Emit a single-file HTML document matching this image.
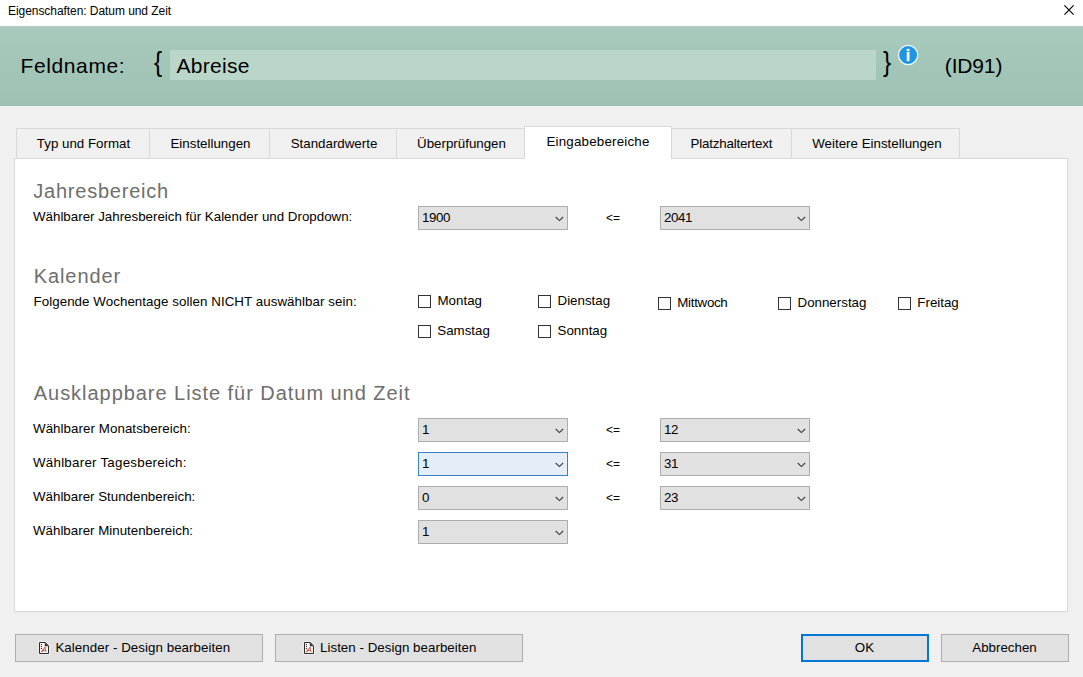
<!DOCTYPE html>
<html lang="de"><head><meta charset="utf-8"><title>Eigenschaften: Datum und Zeit</title>
<style>
*{box-sizing:border-box;margin:0;padding:0}
html,body{width:1083px;height:677px;overflow:hidden;background:#f0f0f0;font-family:"Liberation Sans",sans-serif;color:#000}
.abs{position:absolute;white-space:nowrap}
#titlebar{left:0;top:0;width:1083px;height:26px;background:#fff}
#title{left:8px;top:3px;font-size:12px;line-height:16px}
#header{left:0;top:26px;width:1083px;height:80px;background:linear-gradient(#b3cec4,#b3cec4 1.25%,#a9cabd 1.3%,#9cc1b2)}
#fname{left:170px;top:50px;width:706px;height:30px;background:#b9d6c9}
.h1{font-size:21px;line-height:30px}
.tab{top:128px;height:31px;background:#f0f0f0;border:1px solid #d9d9d9;font-size:13.33px;line-height:30px;text-align:center}
.tab.sel{top:126px;height:33px;background:#fff;border-bottom:none}
#panel{left:14px;top:158px;width:1054px;height:454px;background:#fff;border:1px solid #d8d8d8}
.sec{font-size:20px;color:#6e6e6e;line-height:28px}
.lbl{font-size:13.33px;line-height:16px}
.dd{width:150px;height:24px;background:#e1e1e1;border:1px solid #adadad;font-size:13.33px;line-height:22px;padding:0 0 0 3px;letter-spacing:-0.41px}
.dd.focus{background:#e3eef8;border-color:#3a80c4}
.dd svg{position:absolute;left:135.5px;top:9px}
.le{font-size:12px;line-height:14px}
.cb{width:13px;height:13px;border:1px solid #333;background:#fff}
.btn{height:28px;background:#e1e1e1;border:1px solid #adadad;font-size:13.33px;line-height:26px;text-align:center}
.btn .ic{position:absolute;top:7px;overflow:visible}
.btn.def{border:2px solid #0078d7;line-height:24px}
</style></head><body>
<div class="abs" id="titlebar"></div>
<div class="abs" id="title" style="letter-spacing:-0.06px">Eigenschaften: Datum und Zeit</div>
<svg class="abs" style="left:1064px;top:5px" width="10" height="10" viewBox="0 0 10 10"><path d="M0.4 0.4 L9.6 9.6 M9.6 0.4 L0.4 9.6" stroke="#000" stroke-width="1.15" fill="none"/></svg>
<div class="abs" id="header"></div>
<div class="abs" id="fname"></div>
<div class="abs h1" id="t_feld" style="left:20.6px;top:51px;letter-spacing:0.6px">Feldname:</div>
<div class="abs h1" id="t_lb" style="left:154.2px;top:46px;font-size:28.4px;transform:scaleX(.86);transform-origin:0 0">{</div>
<div class="abs h1" id="t_abr" style="left:176.5px;top:51px;letter-spacing:0.3px">Abreise</div>
<div class="abs h1" id="t_rb" style="left:883.2px;top:46px;font-size:28.4px;transform:scaleX(.86);transform-origin:0 0">}</div>
<div class="abs h1" id="t_id" style="left:944.8px;top:51px;letter-spacing:-0.15px">(ID91)</div>
<svg class="abs" id="info" style="left:897px;top:44px" width="22" height="22" viewBox="0 0 22 22"><circle cx="11.1" cy="11" r="9.6" fill="#2195e2" stroke="#e6f9fd" stroke-width="1.3"/><rect x="9.75" y="4.8" width="2.7" height="2.4" fill="#fff"/><rect x="9.75" y="8" width="2.7" height="9.1" fill="#fff"/></svg>

<div class="abs" id="panel"></div>
<div class="abs tab" id="tab1" style="left:16px;width:134px;padding-left:1px">Typ und Format</div>
<div class="abs tab" id="tab2" style="left:149px;width:121px;padding-left:2px">Einstellungen</div>
<div class="abs tab" id="tab3" style="left:269px;width:128px;padding-left:2px">Standardwerte</div>
<div class="abs tab" id="tab4" style="left:396px;width:130px;padding-left:1px">Überprüfungen</div>
<div class="abs tab sel" id="tab5" style="left:524px;width:148px;letter-spacing:0.2px">Eingabebereiche</div>
<div class="abs tab" id="tab6" style="left:671px;width:121px;letter-spacing:-0.18px">Platzhaltertext</div>
<div class="abs tab" id="tab7" style="left:791px;width:169px;padding-left:3px">Weitere Einstellungen</div>

<div class="abs sec" id="s1" style="left:33.3px;top:177px;letter-spacing:0.77px">Jahresbereich</div>
<div class="abs lbl" id="l1" style="left:33px;top:209px">Wählbarer Jahresbereich für Kalender und Dropdown:</div>
<div class="abs dd" id="d1" style="left:418px;top:206px">1900<svg width="10" height="6" viewBox="0 0 10 6"><path d="M0.7 1 L4.4 4.6 L8.1 1" stroke="#3a3a3a" stroke-width="1.1" fill="none"/></svg></div>
<div class="abs le" id="le1" style="left:606px;top:211px">&lt;=</div>
<div class="abs dd" id="d2" style="left:660px;top:206px">2041<svg width="10" height="6" viewBox="0 0 10 6"><path d="M0.7 1 L4.4 4.6 L8.1 1" stroke="#3a3a3a" stroke-width="1.1" fill="none"/></svg></div>

<div class="abs sec" id="s2" style="left:33.7px;top:262px;letter-spacing:0.92px">Kalender</div>
<div class="abs lbl" id="l2" style="left:33.5px;top:294px;letter-spacing:0.06px">Folgende Wochentage sollen NICHT auswählbar sein:</div>
<div class="abs cb" style="left:418px;top:295px"></div><div class="abs lbl" id="c1" style="left:437.5px;top:293px">Montag</div>
<div class="abs cb" style="left:538px;top:295px"></div><div class="abs lbl" id="c2" style="left:557.5px;top:293px">Dienstag</div>
<div class="abs cb" style="left:658px;top:297px"></div><div class="abs lbl" id="c3" style="left:677.3px;top:295px;letter-spacing:-0.3px">Mittwoch</div>
<div class="abs cb" style="left:778px;top:297px"></div><div class="abs lbl" id="c4" style="left:797.5px;top:295px">Donnerstag</div>
<div class="abs cb" style="left:898px;top:297px"></div><div class="abs lbl" id="c5" style="left:917.3px;top:295px">Freitag</div>
<div class="abs cb" style="left:418px;top:325px"></div><div class="abs lbl" id="c6" style="left:437.3px;top:323px">Samstag</div>
<div class="abs cb" style="left:538px;top:325px"></div><div class="abs lbl" id="c7" style="left:557.5px;top:323px">Sonntag</div>

<div class="abs sec" id="s3" style="left:33.8px;top:379px;letter-spacing:0.955px">Ausklappbare Liste für Datum und Zeit</div>
<div class="abs lbl" id="l3" style="left:33px;top:421px;letter-spacing:0.06px">Wählbarer Monatsbereich:</div>
<div class="abs lbl" id="l4" style="left:33px;top:455px;letter-spacing:0.25px">Wählbarer Tagesbereich:</div>
<div class="abs lbl" id="l5" style="left:33px;top:489px">Wählbarer Stundenbereich:</div>
<div class="abs lbl" id="l6" style="left:33px;top:523px">Wählbarer Minutenbereich:</div>
<div class="abs dd" id="d3" style="left:418px;top:418px">1<svg width="10" height="6" viewBox="0 0 10 6"><path d="M0.7 1 L4.4 4.6 L8.1 1" stroke="#3a3a3a" stroke-width="1.1" fill="none"/></svg></div>
<div class="abs dd focus" id="d4" style="left:418px;top:452px">1<svg width="10" height="6" viewBox="0 0 10 6"><path d="M0.7 1 L4.4 4.6 L8.1 1" stroke="#3a3a3a" stroke-width="1.1" fill="none"/></svg></div>
<div class="abs dd" id="d5" style="left:418px;top:486px">0<svg width="10" height="6" viewBox="0 0 10 6"><path d="M0.7 1 L4.4 4.6 L8.1 1" stroke="#3a3a3a" stroke-width="1.1" fill="none"/></svg></div>
<div class="abs dd" id="d6" style="left:418px;top:520px">1<svg width="10" height="6" viewBox="0 0 10 6"><path d="M0.7 1 L4.4 4.6 L8.1 1" stroke="#3a3a3a" stroke-width="1.1" fill="none"/></svg></div>
<div class="abs le" id="le2" style="left:606px;top:423px">&lt;=</div>
<div class="abs le" id="le3" style="left:606px;top:457px">&lt;=</div>
<div class="abs le" id="le4" style="left:606px;top:491px">&lt;=</div>
<div class="abs dd" id="d7" style="left:660px;top:418px">12<svg width="10" height="6" viewBox="0 0 10 6"><path d="M0.7 1 L4.4 4.6 L8.1 1" stroke="#3a3a3a" stroke-width="1.1" fill="none"/></svg></div>
<div class="abs dd" id="d8" style="left:660px;top:452px">31<svg width="10" height="6" viewBox="0 0 10 6"><path d="M0.7 1 L4.4 4.6 L8.1 1" stroke="#3a3a3a" stroke-width="1.1" fill="none"/></svg></div>
<div class="abs dd" id="d9" style="left:660px;top:486px">23<svg width="10" height="6" viewBox="0 0 10 6"><path d="M0.7 1 L4.4 4.6 L8.1 1" stroke="#3a3a3a" stroke-width="1.1" fill="none"/></svg></div>

<div class="abs btn" id="b1" style="left:15px;top:634px;width:248px;text-align:left;padding-left:39.4px;letter-spacing:0.05px"><svg class="ic" style="left:23px" width="11" height="13" viewBox="0 0 11 13"><path d="M0.5 0.5 H6.3 L9.5 3.7 V11.5 H0.5 Z" fill="none" stroke="#fff" stroke-opacity="0.55" stroke-width="2.6"/><path d="M0.5 0.5 H6.3 L9.5 3.7 V11.5 H0.5 Z" fill="#fdf6f4" stroke="#2b2b2b" stroke-width="1"/><path d="M5.8 0.5 V4.2 H9.5 Z" fill="#2b2b2b"/><rect x="1.9" y="2" width="1.1" height="1.1" fill="#2b2b2b"/><rect x="1.9" y="4" width="1.1" height="1.1" fill="#2b2b2b"/><rect x="1.9" y="6" width="1.1" height="1.1" fill="#2b2b2b"/><path d="M1.9 10.2 L4.6 7" stroke="#b5301e" stroke-width="0.7" fill="none"/><text x="3.1" y="10.3" font-family="Liberation Sans, sans-serif" font-size="7.2" font-style="italic" fill="#b5301e">A</text></svg>Kalender - Design bearbeiten</div>
<div class="abs btn" id="b2" style="left:275px;top:634px;width:248px;text-align:left;padding-left:44px;letter-spacing:0.03px"><svg class="ic" style="left:28px" width="11" height="13" viewBox="0 0 11 13"><path d="M0.5 0.5 H6.3 L9.5 3.7 V11.5 H0.5 Z" fill="none" stroke="#fff" stroke-opacity="0.55" stroke-width="2.6"/><path d="M0.5 0.5 H6.3 L9.5 3.7 V11.5 H0.5 Z" fill="#fdf6f4" stroke="#2b2b2b" stroke-width="1"/><path d="M5.8 0.5 V4.2 H9.5 Z" fill="#2b2b2b"/><rect x="1.9" y="2" width="1.1" height="1.1" fill="#2b2b2b"/><rect x="1.9" y="4" width="1.1" height="1.1" fill="#2b2b2b"/><rect x="1.9" y="6" width="1.1" height="1.1" fill="#2b2b2b"/><path d="M1.9 10.2 L4.6 7" stroke="#b5301e" stroke-width="0.7" fill="none"/><text x="3.1" y="10.3" font-family="Liberation Sans, sans-serif" font-size="7.2" font-style="italic" fill="#b5301e">A</text></svg>Listen - Design bearbeiten</div>
<div class="abs btn def" id="b3" style="left:801px;top:634px;width:128px;padding-right:1px">OK</div>
<div class="abs btn" id="b4" style="left:941px;top:634px;width:128px;padding-right:1px">Abbrechen</div>
</body></html>
